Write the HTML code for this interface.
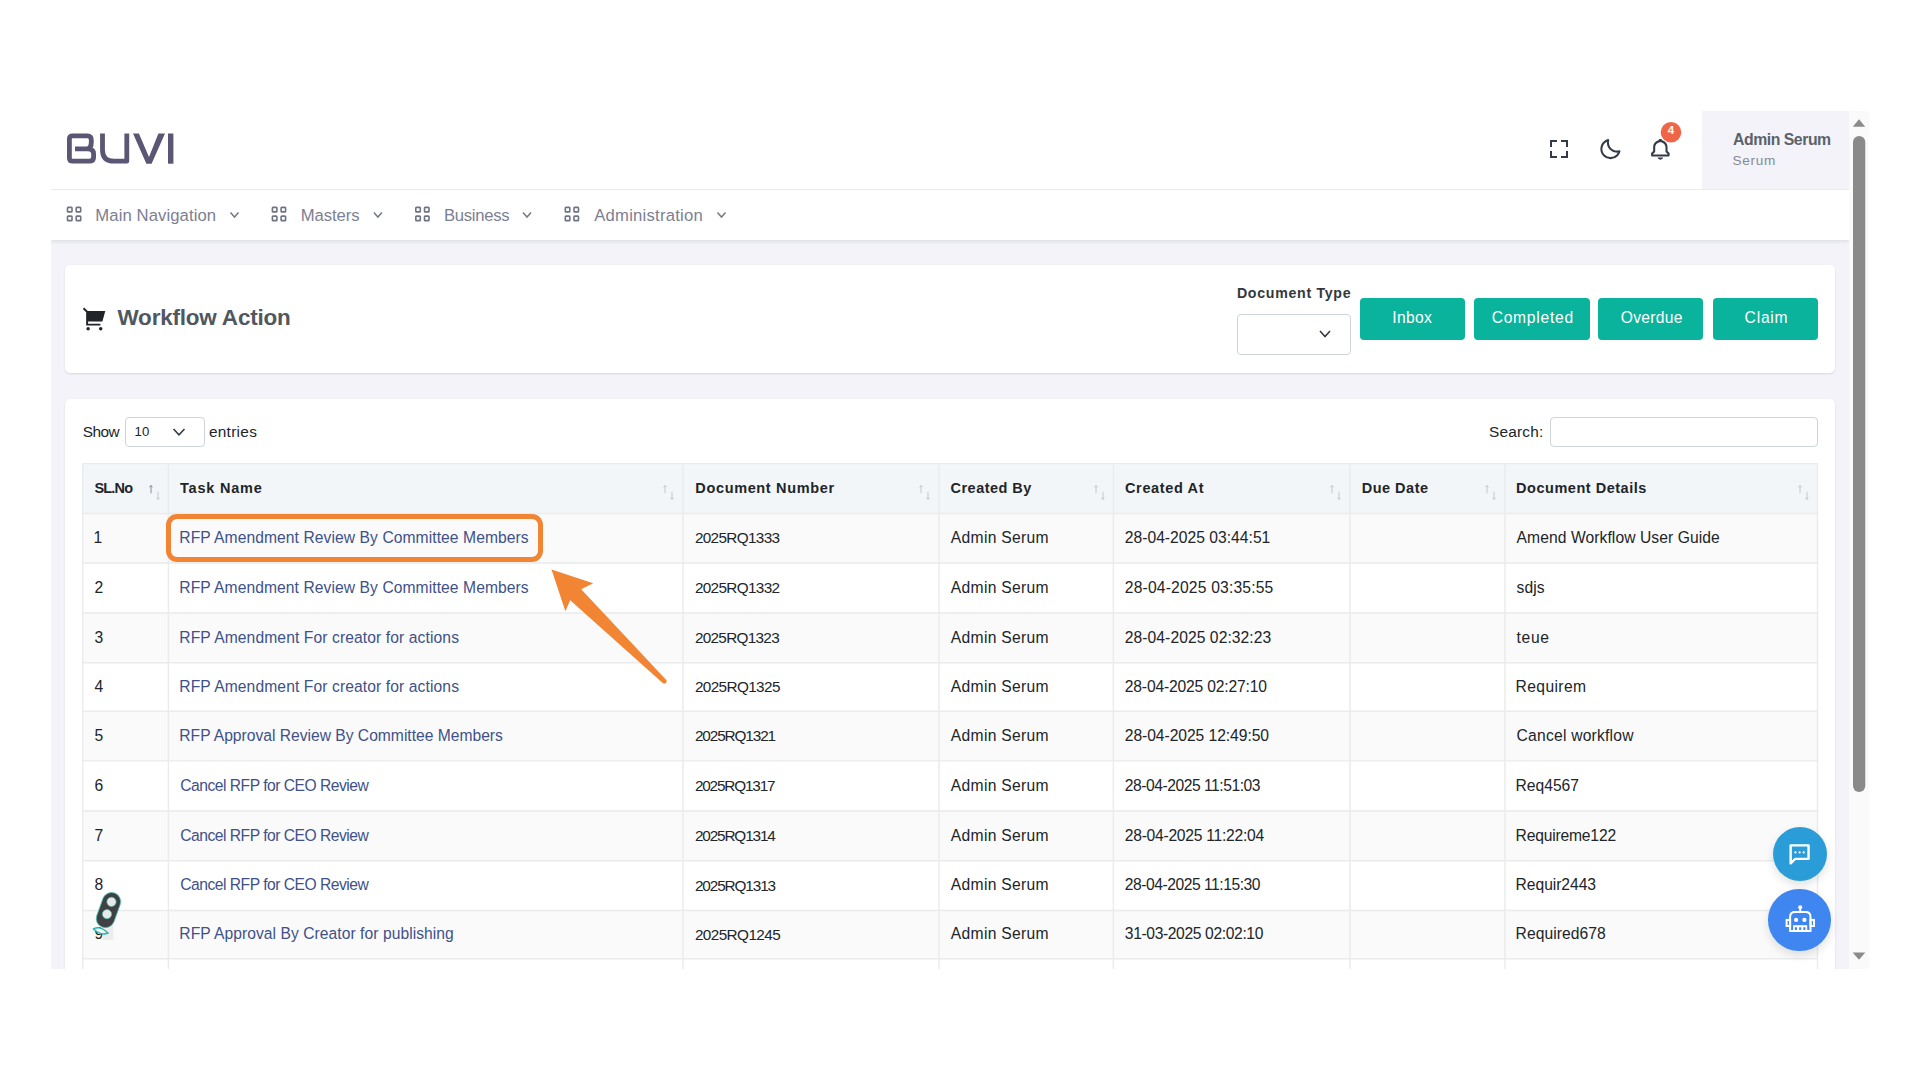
<!DOCTYPE html>
<html><head><meta charset="utf-8">
<style>
html,body{margin:0;padding:0;}
body{width:1920px;height:1080px;background:#fff;overflow:hidden;position:relative;font-family:"Liberation Sans",sans-serif;}
.clip{position:absolute;left:0;top:0;width:1920px;height:969px;overflow:hidden;}
.a{position:absolute;}
.t{position:absolute;white-space:nowrap;font-family:"Liberation Sans",sans-serif;}
.hl{position:absolute;height:1px;background:#e9ebec;}
.vl{position:absolute;width:1px;background:#e9ebec;}
.btn{position:absolute;top:298.2px;height:41.5px;background:#0ab39c;border-radius:4px;}
.srt{position:absolute;top:483px;width:14px;height:18px;}
</style></head><body>
<div class="clip">
  <!-- header -->
  <div class="a" style="left:1702px;top:111px;width:147px;height:78px;background:#f3f3f9"></div>
  <div class="a" style="left:51px;top:189px;width:1798px;height:1px;background:#e9ebec"></div>
  <!-- gray page -->
  <div class="a" style="left:51px;top:240px;width:1798px;height:729px;background:#f3f3f9"></div>
  <!-- nav -->
  <div class="a" style="left:51px;top:190px;width:1798px;height:50px;background:#fff;box-shadow:0 1px 4px rgba(56,65,74,0.15);clip-path:inset(0 0 -10px 0)"></div>
  <!-- cards -->
  <div class="a" style="left:65px;top:265px;width:1770px;height:108px;background:#fff;border-radius:5px;box-shadow:0 1px 2px rgba(56,65,74,0.15)"></div>
  <div class="a" style="left:65px;top:399.2px;width:1770px;height:700px;background:#fff;border-radius:5px;box-shadow:0 1px 2px rgba(56,65,74,0.15)"></div>

  <!-- TABLE -->
  <div class="a" style="left:82.7px;top:463.6px;width:1735px;height:50px;background:#f3f6f9"></div>
  <div id="stripes"></div>
  <div class="a" style="left:82.5px;top:513.50px;width:1735px;height:49.50px;background:#fafafa"></div>
<div class="a" style="left:82.5px;top:613.00px;width:1735px;height:49.80px;background:#fafafa"></div>
<div class="a" style="left:82.5px;top:711.30px;width:1735px;height:49.60px;background:#fafafa"></div>
<div class="a" style="left:82.5px;top:811.00px;width:1735px;height:49.80px;background:#fafafa"></div>
<div class="a" style="left:82.5px;top:910.50px;width:1735px;height:48.20px;background:#fafafa"></div>
  <svg class="a" style="left:0;top:0" width="1920" height="1080" viewBox="0 0 1920 1080"><path d="M82.70 463.6 V980 M168.40 463.6 V980 M683.00 463.6 V980 M939.00 463.6 V980 M1113.40 463.6 V980 M1350.00 463.6 V980 M1505.00 463.6 V980 M1817.50 463.6 V980 M82.5 463.60 H1817.5 M82.5 513.50 H1817.5 M82.5 563.00 H1817.5 M82.5 613.00 H1817.5 M82.5 662.80 H1817.5 M82.5 711.30 H1817.5 M82.5 760.90 H1817.5 M82.5 811.00 H1817.5 M82.5 860.80 H1817.5 M82.5 910.50 H1817.5 M82.5 958.70 H1817.5 " stroke="#e9ebec" stroke-width="1.4" fill="none"/></svg>

  <!-- select doc type -->
  <div class="a" style="left:1237px;top:314px;width:111.5px;height:38.8px;border:1px solid #ced4da;border-radius:4px;background:#fff"></div>
  <svg class="a" style="left:1317px;top:327px" width="16" height="14" viewBox="0 0 16 14"><path d="M3 4 L8 9.5 L13 4" fill="none" stroke="#343a40" stroke-width="1.6"/></svg>
  <div class="btn" style="left:1360.2px;width:105.2px"></div>
  <div class="btn" style="left:1473.9px;width:116.1px"></div>
  <div class="btn" style="left:1598.1px;width:105.3px"></div>
  <div class="btn" style="left:1713.3px;width:104.9px"></div>

  <!-- show select -->
  <div class="a" style="left:125.2px;top:417.4px;width:77.5px;height:27.8px;border:1px solid #ced4da;border-radius:4px;background:#fff"></div>
  <svg class="a" style="left:171px;top:426px" width="16" height="12" viewBox="0 0 16 12"><path d="M2.5 3 L8 8.8 L13.5 3" fill="none" stroke="#343a40" stroke-width="1.6"/></svg>
  <!-- search input -->
  <div class="a" style="left:1549.5px;top:417.3px;width:266px;height:27.7px;border:1px solid #ced4da;border-radius:4px;background:#fff"></div>

  <svg class="a" style="left:147.5px;top:484px" width="20" height="18" viewBox="147.5 484 20 18"><g stroke="#c3c8ce" stroke-width="1" fill="none"><path stroke="#878a99" d="M150.5 493.3 L150.5 485.5 M149.1 487.3 L150.5 485.5 L151.9 487.3"/><path d="M157.5 491.7 L157.5 499.5 M156.1 497.7 L157.5 499.5 L158.9 497.7"/></g></svg>
<svg class="a" style="left:662.1px;top:484px" width="20" height="18" viewBox="662.1 484 20 18"><g stroke="#c3c8ce" stroke-width="1" fill="none"><path stroke="#c3c8ce" d="M665.1 493.3 L665.1 485.5 M663.7 487.3 L665.1 485.5 L666.5 487.3"/><path d="M672.1 491.7 L672.1 499.5 M670.7 497.7 L672.1 499.5 L673.5 497.7"/></g></svg>
<svg class="a" style="left:918.1px;top:484px" width="20" height="18" viewBox="918.1 484 20 18"><g stroke="#c3c8ce" stroke-width="1" fill="none"><path stroke="#c3c8ce" d="M921.1 493.3 L921.1 485.5 M919.7 487.3 L921.1 485.5 L922.5 487.3"/><path d="M928.1 491.7 L928.1 499.5 M926.7 497.7 L928.1 499.5 L929.5 497.7"/></g></svg>
<svg class="a" style="left:1092.5px;top:484px" width="20" height="18" viewBox="1092.5 484 20 18"><g stroke="#c3c8ce" stroke-width="1" fill="none"><path stroke="#c3c8ce" d="M1095.5 493.3 L1095.5 485.5 M1094.1 487.3 L1095.5 485.5 L1096.9 487.3"/><path d="M1102.5 491.7 L1102.5 499.5 M1101.1 497.7 L1102.5 499.5 L1103.9 497.7"/></g></svg>
<svg class="a" style="left:1329.1px;top:484px" width="20" height="18" viewBox="1329.1 484 20 18"><g stroke="#c3c8ce" stroke-width="1" fill="none"><path stroke="#c3c8ce" d="M1332.1 493.3 L1332.1 485.5 M1330.7 487.3 L1332.1 485.5 L1333.5 487.3"/><path d="M1339.1 491.7 L1339.1 499.5 M1337.7 497.7 L1339.1 499.5 L1340.5 497.7"/></g></svg>
<svg class="a" style="left:1484.1px;top:484px" width="20" height="18" viewBox="1484.1 484 20 18"><g stroke="#c3c8ce" stroke-width="1" fill="none"><path stroke="#c3c8ce" d="M1487.1 493.3 L1487.1 485.5 M1485.7 487.3 L1487.1 485.5 L1488.5 487.3"/><path d="M1494.1 491.7 L1494.1 499.5 M1492.7 497.7 L1494.1 499.5 L1495.5 497.7"/></g></svg>
<svg class="a" style="left:1796.6px;top:484px" width="20" height="18" viewBox="1796.6 484 20 18"><g stroke="#c3c8ce" stroke-width="1" fill="none"><path stroke="#c3c8ce" d="M1799.6 493.3 L1799.6 485.5 M1798.2 487.3 L1799.6 485.5 L1801.0 487.3"/><path d="M1806.6 491.7 L1806.6 499.5 M1805.2 497.7 L1806.6 499.5 L1808.0 497.7"/></g></svg>

  <!-- orange highlight -->
  <div class="a" style="left:166px;top:513.5px;width:367px;height:38px;border:5px solid #f28533;border-radius:11px;z-index:5"></div>
  <svg class="a" style="left:0;top:0;z-index:6" width="1920" height="1080" viewBox="0 0 1920 1080">
    <path d="M551.5 569.4 L593.2 583.3 L581.2 589.2 L666.5 680.2 Q667 684.5 663 683.2 L570.2 600.2 L565.4 611.2 Z" fill="#f28533"/>
  </svg>

  <!-- logo -->
  <svg class="a" style="left:0;top:0" width="200" height="200" viewBox="0 0 200 200">
    <g fill="none" stroke="#5a5673" stroke-width="4.8" stroke-linejoin="round">
      <path d="M75 148.9 L88 148.9 Q91.3 147.5 91.3 142.5 L91.3 140 Q91.3 135.9 87.5 135.9 L72.5 135.9 Q69.4 135.9 69.4 139 L69.4 158 Q69.4 161.2 72.5 161.2 L89.5 161.2 Q93.6 161.2 93.6 157 L93.6 154 Q93.6 148.9 88 148.9"/>
      <path d="M102.5 133.5 L102.5 150 Q102.5 161.2 114 161.2 L126.8 161.2 L126.8 133.5"/>
    </g>
    <path d="M133 133.5 L138.9 133.5 L149 157 L158.4 133.5 L165 133.5 L151.6 163.7 L146.4 163.7 Z" fill="#5a5673"/>
    <rect x="168" y="133.5" width="5.4" height="30.2" fill="#5a5673"/>
  </svg>

  <!-- header icons -->
  <svg class="a" style="left:1547.2px;top:136.5px" width="24" height="24" viewBox="0 0 24 24"><path fill="#343a48" d="M5 5h5V3H3v7h2zm5 14H5v-5H3v7h7zm11-5h-2v5h-5v2h7zm-7-9h5v5h2V3h-7z"/></svg>
  <svg class="a" style="left:1598.15px;top:136.7px" width="24.5" height="24.5" viewBox="0 0 24 24"><path fill="#343a48" d="M20.742 13.045a8.088 8.088 0 0 1-2.077.271c-2.135 0-4.140-.83-5.646-2.336a8.025 8.025 0 0 1-2.064-7.723A1 1 0 0 0 9.730 2.034a10.014 10.014 0 0 0-4.489 2.582c-3.898 3.898-3.898 10.243 0 14.143a9.937 9.937 0 0 0 7.072 2.930 9.930 9.930 0 0 0 7.070-2.929 10.007 10.007 0 0 0 2.583-4.491 1.001 1.001 0 0 0-1.224-1.224zm-2.772 4.301a7.947 7.947 0 0 1-5.656 2.343 7.953 7.953 0 0 1-5.658-2.344c-3.118-3.119-3.118-8.195 0-11.314a7.923 7.923 0 0 1 2.060-1.483 10.027 10.027 0 0 0 2.890 7.848 9.972 9.972 0 0 0 7.848 2.891 8.036 8.036 0 0 1-1.484 2.059z"/></svg>
  <svg class="a" style="left:1648.2px;top:136.9px" width="24.7" height="24.7" viewBox="0 0 24 24"><path fill="#343a48" d="M19 13.586V10c0-3.217-2.185-5.927-5.145-6.742C13.562 2.520 12.846 2 12 2s-1.562.520-1.855 1.258C7.185 4.074 5 6.783 5 10v3.586l-1.707 1.707A.996.996 0 0 0 3 16v2a1 1 0 0 0 1 1h16a1 1 0 0 0 1-1v-2a.996.996 0 0 0-.293-.707L19 13.586zM19 17H5v-.586l1.707-1.707A.996.996 0 0 0 7 14v-4c0-2.757 2.243-5 5-5s5 2.243 5 5v4c0 .266.105.520.293.707L19 16.414V17zm-7 5a2.980 2.980 0 0 0 2.818-2H9.182A2.980 2.980 0 0 0 12 22z"/></svg>
  <svg class="a" style="left:1650px;top:110px" width="40" height="40" viewBox="1650 110 40 40">
    <circle cx="1671" cy="132.3" r="10.3" fill="#f06548"/>
    <text x="1671" y="134.4" text-anchor="middle" font-family="Liberation Sans" font-weight="bold" font-size="11.5" fill="#fff">4</text>
  </svg>

  <!-- nav icons -->
  <svg class="a" style="left:0;top:190px" width="800" height="50" viewBox="0 190 800 50"><rect x="67.50" y="207.40" width="4.5" height="4.5" rx="0.7" fill="none" stroke="#6f7386" stroke-width="1.6"/><rect x="67.50" y="216.10" width="4.5" height="4.5" rx="0.7" fill="none" stroke="#6f7386" stroke-width="1.6"/><rect x="76.20" y="207.40" width="4.5" height="4.5" rx="0.7" fill="none" stroke="#6f7386" stroke-width="1.6"/><rect x="76.20" y="216.10" width="4.5" height="4.5" rx="0.7" fill="none" stroke="#6f7386" stroke-width="1.6"/><path d="M230.5 212.5 L234.5 217 L238.5 212.5" fill="none" stroke="#74788a" stroke-width="1.5"/></svg>
<svg class="a" style="left:0;top:190px" width="800" height="50" viewBox="0 190 800 50"><rect x="272.40" y="207.40" width="4.5" height="4.5" rx="0.7" fill="none" stroke="#6f7386" stroke-width="1.6"/><rect x="272.40" y="216.10" width="4.5" height="4.5" rx="0.7" fill="none" stroke="#6f7386" stroke-width="1.6"/><rect x="281.10" y="207.40" width="4.5" height="4.5" rx="0.7" fill="none" stroke="#6f7386" stroke-width="1.6"/><rect x="281.10" y="216.10" width="4.5" height="4.5" rx="0.7" fill="none" stroke="#6f7386" stroke-width="1.6"/><path d="M373.9 212.5 L377.9 217 L381.9 212.5" fill="none" stroke="#74788a" stroke-width="1.5"/></svg>
<svg class="a" style="left:0;top:190px" width="800" height="50" viewBox="0 190 800 50"><rect x="415.80" y="207.40" width="4.5" height="4.5" rx="0.7" fill="none" stroke="#6f7386" stroke-width="1.6"/><rect x="415.80" y="216.10" width="4.5" height="4.5" rx="0.7" fill="none" stroke="#6f7386" stroke-width="1.6"/><rect x="424.50" y="207.40" width="4.5" height="4.5" rx="0.7" fill="none" stroke="#6f7386" stroke-width="1.6"/><rect x="424.50" y="216.10" width="4.5" height="4.5" rx="0.7" fill="none" stroke="#6f7386" stroke-width="1.6"/><path d="M523.0 212.5 L527.0 217 L531.0 212.5" fill="none" stroke="#74788a" stroke-width="1.5"/></svg>
<svg class="a" style="left:0;top:190px" width="800" height="50" viewBox="0 190 800 50"><rect x="565.30" y="207.40" width="4.5" height="4.5" rx="0.7" fill="none" stroke="#6f7386" stroke-width="1.6"/><rect x="565.30" y="216.10" width="4.5" height="4.5" rx="0.7" fill="none" stroke="#6f7386" stroke-width="1.6"/><rect x="574.00" y="207.40" width="4.5" height="4.5" rx="0.7" fill="none" stroke="#6f7386" stroke-width="1.6"/><rect x="574.00" y="216.10" width="4.5" height="4.5" rx="0.7" fill="none" stroke="#6f7386" stroke-width="1.6"/><path d="M717.5 212.5 L721.5 217 L725.5 212.5" fill="none" stroke="#74788a" stroke-width="1.5"/></svg>

  <!-- cart -->
  <svg class="a" style="left:80px;top:305px" width="30" height="30" viewBox="80 305 30 30">
    <path d="M83.5 308.3 L87.1 311.7 L87.1 324.65 L100.4 324.65" fill="none" stroke="#212529" stroke-width="1.9" stroke-linejoin="miter"/>
    <path d="M87.1 311.1 L105.3 311.1 L102.4 321.5 L87.1 321.5 Z" fill="#212529"/>
    <circle cx="88.1" cy="328.8" r="1.75" fill="#212529"/>
    <circle cx="100.7" cy="328.8" r="1.75" fill="#212529"/>
  </svg>

  <!-- chat buttons -->
  <div class="a" style="left:1773px;top:826.5px;width:54px;height:54px;border-radius:50%;background:#2a9cd8;box-shadow:0 4px 10px rgba(0,0,0,0.12);z-index:7"></div>
  <svg class="a" style="left:1780px;top:835px;z-index:8" width="40" height="40" viewBox="1780 835 40 40">
    <path d="M1790.65 863.3 V845.35 H1808.55 V858.85 H1795.3 Z" fill="none" stroke="#fff" stroke-width="2.4" stroke-linejoin="round"/>
    <circle cx="1795.4" cy="852.4" r="1.1" fill="#fff"/><circle cx="1799.6" cy="852.4" r="1.1" fill="#fff"/><circle cx="1803.7" cy="852.4" r="1.1" fill="#fff"/>
  </svg>
  <div class="a" style="left:1768.4px;top:889.4px;width:62.3px;height:61.6px;border-radius:50%;background:#3f86f0;box-shadow:0 4px 10px rgba(0,0,0,0.12);z-index:7"></div>
  <svg class="a" style="left:1780px;top:900px;z-index:8" width="40" height="40" viewBox="1780 900 40 40">
    <g fill="none" stroke="#fff" stroke-width="2">
      <path d="M1790.1 931 V917 Q1790.1 912.1 1795 912.1 H1805.6 Q1810.5 912.1 1810.5 917 V931 Z"/>
      <line x1="1800.2" y1="907.5" x2="1800.2" y2="912"/>
      <rect x="1786.6" y="919.9" width="3.5" height="6.1"/>
      <rect x="1810.5" y="919.9" width="3.5" height="6.1"/>
    </g>
    <circle cx="1800.2" cy="907.3" r="2" fill="#fff"/>
    <circle cx="1796.1" cy="919.9" r="2.1" fill="#fff"/>
    <circle cx="1804.4" cy="919.9" r="2.1" fill="#fff"/>
    <rect x="1793.1" y="925.2" width="14.1" height="6" fill="#fff"/>
    <g fill="#3f86f0"><rect x="1794.8" y="927.3" width="2.2" height="2.6"/><rect x="1799.1" y="927.3" width="2.2" height="2.6"/><rect x="1803.3" y="927.3" width="2.2" height="2.6"/></g>
  </svg>

  <!-- key icon -->
  <svg class="a" style="left:84px;top:880px;z-index:8" width="50" height="70" viewBox="84 880 50 70">
    <rect x="102.5" y="925" width="11" height="15" fill="#ebebeb" opacity="0.9"/>
    <path d="M93.5 929 Q100 925 108 933 Q101 936 93.5 929 Z" fill="#f4f4f4" stroke="#2fb5a8" stroke-width="1.5"/>
    <g transform="rotate(20 108.5 910)">
      <rect x="98.6" y="891.2" width="19.8" height="37.8" rx="9.9" fill="#f2f2f2" opacity="0.8"/>
      <rect x="99.4" y="892" width="18.2" height="36.2" rx="9.1" fill="#414042" stroke="#45c2b4" stroke-width="0.7"/>
      <circle cx="108.5" cy="901.3" r="4.6" fill="#e8e8e8" stroke="#45c2b4" stroke-width="0.6"/>
      <circle cx="108.5" cy="914.4" r="4.6" fill="#e8e8e8" stroke="#45c2b4" stroke-width="0.6"/>
    </g>
  </svg>

  <!-- scrollbar -->
  <div class="a" style="left:1849px;top:111px;width:20px;height:858px;background:#fafafa"></div>
  <svg class="a" style="left:1849px;top:111px" width="20" height="858" viewBox="1849 111 20 858">
    <path d="M1852.8 126.7 L1859 119.3 L1865.2 126.7 Z" fill="#8a8a8a"/>
    <path d="M1852.6 952.5 L1865.3 952.5 L1859 959.7 Z" fill="#8a8a8a"/>
    <rect x="1853" y="136" width="12.3" height="656" rx="6.15" fill="#8a8a8a"/>
  </svg>

  <div class="t" style="left:1733.00px;top:131.57px;font-size:15.80px;line-height:15.80px;letter-spacing:-0.456px;font-weight:bold;color:#5b626a">Admin Serum</div>
<div class="t" style="left:1732.50px;top:154.44px;font-size:13.60px;line-height:13.60px;letter-spacing:0.696px;font-weight:normal;color:#878a99">Serum</div>
<div class="t" style="left:95.30px;top:208.23px;font-size:16.67px;line-height:16.67px;letter-spacing:0.095px;font-weight:normal;color:#7c8093">Main Navigation</div>
<div class="t" style="left:300.70px;top:208.23px;font-size:16.67px;line-height:16.67px;letter-spacing:-0.051px;font-weight:normal;color:#7c8093">Masters</div>
<div class="t" style="left:444.00px;top:208.23px;font-size:16.67px;line-height:16.67px;letter-spacing:-0.287px;font-weight:normal;color:#7c8093">Business</div>
<div class="t" style="left:594.25px;top:208.23px;font-size:16.67px;line-height:16.67px;letter-spacing:0.229px;font-weight:normal;color:#7c8093">Administration</div>
<div class="t" style="left:117.50px;top:306.91px;font-size:22.46px;line-height:22.46px;letter-spacing:-0.185px;font-weight:bold;color:#50575f">Workflow Action</div>
<div class="t" style="left:1236.90px;top:286.23px;font-size:14.20px;line-height:14.20px;letter-spacing:0.694px;font-weight:bold;color:#33383d">Document Type</div>
<div class="t" style="left:1392.30px;top:309.70px;font-size:15.65px;line-height:15.65px;letter-spacing:0.315px;font-weight:normal;color:#ffffff">Inbox</div>
<div class="t" style="left:1491.70px;top:309.70px;font-size:15.65px;line-height:15.65px;letter-spacing:0.720px;font-weight:normal;color:#ffffff">Completed</div>
<div class="t" style="left:1620.70px;top:309.70px;font-size:15.65px;line-height:15.65px;letter-spacing:0.285px;font-weight:normal;color:#ffffff">Overdue</div>
<div class="t" style="left:1744.60px;top:309.70px;font-size:15.65px;line-height:15.65px;letter-spacing:0.764px;font-weight:normal;color:#ffffff">Claim</div>
<div class="t" style="left:82.80px;top:423.64px;font-size:15.36px;line-height:15.36px;letter-spacing:-0.510px;font-weight:normal;color:#212529">Show</div>
<div class="t" style="left:134.60px;top:425.48px;font-size:13.20px;line-height:13.20px;letter-spacing:0.000px;font-weight:normal;color:#212529">10</div>
<div class="t" style="left:208.90px;top:423.61px;font-size:15.40px;line-height:15.40px;letter-spacing:0.300px;font-weight:normal;color:#212529">entries</div>
<div class="t" style="left:1489.00px;top:423.81px;font-size:15.40px;line-height:15.40px;letter-spacing:0.206px;font-weight:normal;color:#212529">Search:</div>
<div class="t" style="left:94.40px;top:480.98px;font-size:14.49px;line-height:14.49px;letter-spacing:-0.773px;font-weight:bold;color:#212529">SL.No</div>
<div class="t" style="left:180.00px;top:480.98px;font-size:14.49px;line-height:14.49px;letter-spacing:0.793px;font-weight:bold;color:#212529">Task Name</div>
<div class="t" style="left:695.30px;top:480.98px;font-size:14.49px;line-height:14.49px;letter-spacing:0.655px;font-weight:bold;color:#212529">Document Number</div>
<div class="t" style="left:950.60px;top:480.98px;font-size:14.49px;line-height:14.49px;letter-spacing:0.465px;font-weight:bold;color:#212529">Created By</div>
<div class="t" style="left:1125.00px;top:480.98px;font-size:14.49px;line-height:14.49px;letter-spacing:0.642px;font-weight:bold;color:#212529">Created At</div>
<div class="t" style="left:1361.70px;top:480.98px;font-size:14.49px;line-height:14.49px;letter-spacing:0.510px;font-weight:bold;color:#212529">Due Date</div>
<div class="t" style="left:1516.10px;top:480.98px;font-size:14.49px;line-height:14.49px;letter-spacing:0.528px;font-weight:bold;color:#212529">Document Details</div>
<div class="t" style="left:93.50px;top:530.05px;font-size:15.65px;line-height:15.65px;letter-spacing:0.000px;font-weight:normal;color:#212529">1</div>
<div class="t" style="left:179.30px;top:530.05px;font-size:15.65px;line-height:15.65px;letter-spacing:0.071px;font-weight:normal;color:#405189">RFP Amendment Review By Committee Members</div>
<div class="t" style="left:694.90px;top:530.35px;font-size:15.30px;line-height:15.30px;letter-spacing:-0.644px;font-weight:normal;color:#212529">2025RQ1333</div>
<div class="t" style="left:950.80px;top:530.05px;font-size:15.65px;line-height:15.65px;letter-spacing:0.308px;font-weight:normal;color:#212529">Admin Serum</div>
<div class="t" style="left:1124.80px;top:530.05px;font-size:15.65px;line-height:15.65px;letter-spacing:0.015px;font-weight:normal;color:#212529">28-04-2025 03:44:51</div>
<div class="t" style="left:1516.60px;top:530.05px;font-size:15.65px;line-height:15.65px;letter-spacing:0.072px;font-weight:normal;color:#212529">Amend Workflow User Guide</div>
<div class="t" style="left:94.50px;top:579.80px;font-size:15.65px;line-height:15.65px;letter-spacing:0.000px;font-weight:normal;color:#212529">2</div>
<div class="t" style="left:179.30px;top:579.80px;font-size:15.65px;line-height:15.65px;letter-spacing:0.071px;font-weight:normal;color:#405189">RFP Amendment Review By Committee Members</div>
<div class="t" style="left:694.90px;top:580.10px;font-size:15.30px;line-height:15.30px;letter-spacing:-0.644px;font-weight:normal;color:#212529">2025RQ1332</div>
<div class="t" style="left:950.80px;top:579.80px;font-size:15.65px;line-height:15.65px;letter-spacing:0.308px;font-weight:normal;color:#212529">Admin Serum</div>
<div class="t" style="left:1124.80px;top:579.80px;font-size:15.65px;line-height:15.65px;letter-spacing:0.181px;font-weight:normal;color:#212529">28-04-2025 03:35:55</div>
<div class="t" style="left:1516.60px;top:579.80px;font-size:15.65px;line-height:15.65px;letter-spacing:0.035px;font-weight:normal;color:#212529">sdjs</div>
<div class="t" style="left:94.50px;top:629.70px;font-size:15.65px;line-height:15.65px;letter-spacing:0.000px;font-weight:normal;color:#212529">3</div>
<div class="t" style="left:179.30px;top:629.70px;font-size:15.65px;line-height:15.65px;letter-spacing:0.098px;font-weight:normal;color:#405189">RFP Amendment For creator for actions</div>
<div class="t" style="left:694.90px;top:630.00px;font-size:15.30px;line-height:15.30px;letter-spacing:-0.689px;font-weight:normal;color:#212529">2025RQ1323</div>
<div class="t" style="left:950.80px;top:629.70px;font-size:15.65px;line-height:15.65px;letter-spacing:0.308px;font-weight:normal;color:#212529">Admin Serum</div>
<div class="t" style="left:1124.80px;top:629.70px;font-size:15.65px;line-height:15.65px;letter-spacing:0.065px;font-weight:normal;color:#212529">28-04-2025 02:32:23</div>
<div class="t" style="left:1516.60px;top:629.70px;font-size:15.65px;line-height:15.65px;letter-spacing:0.652px;font-weight:normal;color:#212529">teue</div>
<div class="t" style="left:94.50px;top:678.85px;font-size:15.65px;line-height:15.65px;letter-spacing:0.000px;font-weight:normal;color:#212529">4</div>
<div class="t" style="left:179.30px;top:678.85px;font-size:15.65px;line-height:15.65px;letter-spacing:0.098px;font-weight:normal;color:#405189">RFP Amendment For creator for actions</div>
<div class="t" style="left:694.90px;top:679.14px;font-size:15.30px;line-height:15.30px;letter-spacing:-0.611px;font-weight:normal;color:#212529">2025RQ1325</div>
<div class="t" style="left:950.80px;top:678.85px;font-size:15.65px;line-height:15.65px;letter-spacing:0.308px;font-weight:normal;color:#212529">Admin Serum</div>
<div class="t" style="left:1124.80px;top:678.85px;font-size:15.65px;line-height:15.65px;letter-spacing:-0.174px;font-weight:normal;color:#212529">28-04-2025 02:27:10</div>
<div class="t" style="left:1515.60px;top:678.85px;font-size:15.65px;line-height:15.65px;letter-spacing:0.375px;font-weight:normal;color:#212529">Requirem</div>
<div class="t" style="left:94.50px;top:727.90px;font-size:15.65px;line-height:15.65px;letter-spacing:0.000px;font-weight:normal;color:#212529">5</div>
<div class="t" style="left:179.30px;top:727.90px;font-size:15.65px;line-height:15.65px;letter-spacing:-0.009px;font-weight:normal;color:#405189">RFP Approval Review By Committee Members</div>
<div class="t" style="left:694.90px;top:728.19px;font-size:15.30px;line-height:15.30px;letter-spacing:-1.089px;font-weight:normal;color:#212529">2025RQ1321</div>
<div class="t" style="left:950.80px;top:727.90px;font-size:15.65px;line-height:15.65px;letter-spacing:0.308px;font-weight:normal;color:#212529">Admin Serum</div>
<div class="t" style="left:1124.80px;top:727.90px;font-size:15.65px;line-height:15.65px;letter-spacing:-0.057px;font-weight:normal;color:#212529">28-04-2025 12:49:50</div>
<div class="t" style="left:1516.60px;top:727.90px;font-size:15.65px;line-height:15.65px;letter-spacing:0.216px;font-weight:normal;color:#212529">Cancel workflow</div>
<div class="t" style="left:94.50px;top:777.75px;font-size:15.65px;line-height:15.65px;letter-spacing:0.000px;font-weight:normal;color:#212529">6</div>
<div class="t" style="left:180.30px;top:777.75px;font-size:15.65px;line-height:15.65px;letter-spacing:-0.503px;font-weight:normal;color:#405189">Cancel RFP for CEO Review</div>
<div class="t" style="left:694.90px;top:778.05px;font-size:15.30px;line-height:15.30px;letter-spacing:-1.155px;font-weight:normal;color:#212529">2025RQ1317</div>
<div class="t" style="left:950.80px;top:777.75px;font-size:15.65px;line-height:15.65px;letter-spacing:0.308px;font-weight:normal;color:#212529">Admin Serum</div>
<div class="t" style="left:1124.80px;top:777.75px;font-size:15.65px;line-height:15.65px;letter-spacing:-0.465px;font-weight:normal;color:#212529">28-04-2025 11:51:03</div>
<div class="t" style="left:1515.60px;top:777.75px;font-size:15.65px;line-height:15.65px;letter-spacing:-0.015px;font-weight:normal;color:#212529">Req4567</div>
<div class="t" style="left:94.50px;top:827.70px;font-size:15.65px;line-height:15.65px;letter-spacing:0.000px;font-weight:normal;color:#212529">7</div>
<div class="t" style="left:180.30px;top:827.70px;font-size:15.65px;line-height:15.65px;letter-spacing:-0.503px;font-weight:normal;color:#405189">Cancel RFP for CEO Review</div>
<div class="t" style="left:694.90px;top:828.00px;font-size:15.30px;line-height:15.30px;letter-spacing:-1.122px;font-weight:normal;color:#212529">2025RQ1314</div>
<div class="t" style="left:950.80px;top:827.70px;font-size:15.65px;line-height:15.65px;letter-spacing:0.308px;font-weight:normal;color:#212529">Admin Serum</div>
<div class="t" style="left:1124.80px;top:827.70px;font-size:15.65px;line-height:15.65px;letter-spacing:-0.265px;font-weight:normal;color:#212529">28-04-2025 11:22:04</div>
<div class="t" style="left:1515.60px;top:827.70px;font-size:15.65px;line-height:15.65px;letter-spacing:-0.191px;font-weight:normal;color:#212529">Requireme122</div>
<div class="t" style="left:94.50px;top:877.45px;font-size:15.65px;line-height:15.65px;letter-spacing:0.000px;font-weight:normal;color:#212529">8</div>
<div class="t" style="left:180.30px;top:877.45px;font-size:15.65px;line-height:15.65px;letter-spacing:-0.503px;font-weight:normal;color:#405189">Cancel RFP for CEO Review</div>
<div class="t" style="left:694.90px;top:877.75px;font-size:15.30px;line-height:15.30px;letter-spacing:-1.089px;font-weight:normal;color:#212529">2025RQ1313</div>
<div class="t" style="left:950.80px;top:877.45px;font-size:15.65px;line-height:15.65px;letter-spacing:0.308px;font-weight:normal;color:#212529">Admin Serum</div>
<div class="t" style="left:1124.80px;top:877.45px;font-size:15.65px;line-height:15.65px;letter-spacing:-0.465px;font-weight:normal;color:#212529">28-04-2025 11:15:30</div>
<div class="t" style="left:1515.60px;top:877.45px;font-size:15.65px;line-height:15.65px;letter-spacing:-0.052px;font-weight:normal;color:#212529">Requir2443</div>
<div class="t" style="left:94.50px;top:926.40px;font-size:15.65px;line-height:15.65px;letter-spacing:0.000px;font-weight:normal;color:#212529">9</div>
<div class="t" style="left:179.30px;top:926.40px;font-size:15.65px;line-height:15.65px;letter-spacing:0.048px;font-weight:normal;color:#405189">RFP Approval By Creator for publishing</div>
<div class="t" style="left:694.90px;top:926.70px;font-size:15.30px;line-height:15.30px;letter-spacing:-0.577px;font-weight:normal;color:#212529">2025RQ1245</div>
<div class="t" style="left:950.80px;top:926.40px;font-size:15.65px;line-height:15.65px;letter-spacing:0.308px;font-weight:normal;color:#212529">Admin Serum</div>
<div class="t" style="left:1124.80px;top:926.40px;font-size:15.65px;line-height:15.65px;letter-spacing:-0.369px;font-weight:normal;color:#212529">31-03-2025 02:02:10</div>
<div class="t" style="left:1515.60px;top:926.40px;font-size:15.65px;line-height:15.65px;letter-spacing:0.053px;font-weight:normal;color:#212529">Required678</div>
</div>
</body></html>
